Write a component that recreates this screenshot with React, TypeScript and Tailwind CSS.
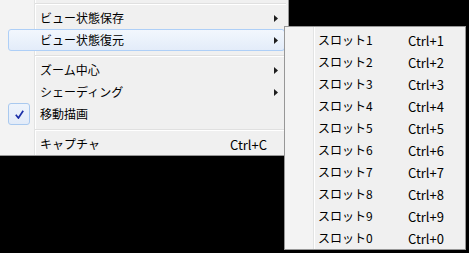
import React from "react";

const font = { fontFamily: '"Noto Sans CJK JP", "Noto Sans", sans-serif' };

function Arrow() {
  return (
    <svg width="4" height="7" viewBox="0 0 4 7" className="shrink-0">
      <polygon points="0,0 4,3.5 0,7" fill="#1e1e1e" />
    </svg>
  );
}

function Sep({ top = 4, h = 8, pl = 35 }: { top?: number; h?: number; pl?: number }) {
  return (
    <div className="flex flex-col pr-[2px]" style={{ height: h, paddingTop: top, paddingLeft: pl }}>
      <div className="h-px bg-[#e0e0e0]" />
      <div className="h-px bg-white" />
    </div>
  );
}

type ItemProps = {
  label: string;
  shortcut?: string;
  sub?: boolean;
  hot?: boolean;
  checked?: boolean;
};

function MainItem({ label, shortcut, sub, hot, checked }: ItemProps) {
  return (
    <div
      className={
        "box-border flex h-[22px] items-center ml-[8px] mr-[3px] rounded-[3px] " +
        (hot
          ? "border border-[#aecff7] bg-[linear-gradient(to_bottom,#f2f7fd,#e3ecf9)]"
          : "border border-transparent")
      }
    >
      <div className="flex w-[31px] shrink-0 items-center self-stretch">
        {checked && (
          <div className="ml-[-1px] mt-[-1px] mb-[-1px] flex h-[22px] w-[22px] items-center justify-center rounded-[3px] border border-[#a9c9ef] bg-[linear-gradient(to_bottom,#eef4fc,#e2ebf8)]">
            <svg width="9" height="9" viewBox="0 0 9 9">
              <polyline points="0.8,4.8 3.4,8 8.2,0.8" fill="none" stroke="#1b2fa8" strokeWidth="1.7" />
            </svg>
          </div>
        )}
      </div>
      <span className="w-[190px] shrink-0 text-[12px] leading-none text-black">{label}</span>
      <span className="flex-1 text-[13px] leading-none text-black">{shortcut}</span>
      {sub && (
        <div className="mr-[6px]">
          <Arrow />
        </div>
      )}
    </div>
  );
}

function SubItem({ n }: { n: string }) {
  return (
    <div className="box-border flex h-[22px] items-center ml-[3px] mr-[3px] border border-transparent">
      <div className="w-[29px] shrink-0" />
      <span className="w-[90px] shrink-0 text-[12px] leading-none text-black">{"スロット" + n}</span>
      <span className="text-[13px] leading-none text-black">{"Ctrl+" + n}</span>
    </div>
  );
}

export default function App() {
  const slots = ["1", "2", "3", "4", "5", "6", "7", "8", "9", "0"];
  return (
    <div className="relative h-[253px] w-[469px] overflow-hidden bg-black" style={font}>
      {/* main menu */}
      <div className="absolute left-[-1px] top-[-2px] box-border w-[290px] border border-[#979797] bg-[linear-gradient(to_right,#f3f3f3_0_34px,#e2e3e3_34px_35px,#ffffff_35px_36px,#f0f0f0_36px)]">
        <Sep top={4} h={8} />
        <MainItem label="ビュー状態保存" sub />
        <MainItem label="ビュー状態復元" sub hot />
        <Sep />
        <MainItem label="ズーム中心" sub />
        <MainItem label="シェーディング" sub />
        <MainItem label="移動描画" checked />
        <Sep />
        <MainItem label="キャプチャ" shortcut="Ctrl+C" />
      </div>
      {/* submenu */}
      <div className="absolute left-[284px] top-[26px] box-border h-[224px] w-[182px] border border-[#979797] bg-[linear-gradient(to_right,#f3f3f3_0_28px,#e2e3e3_28px_29px,#ffffff_29px_30px,#f0f0f0_30px)] pt-[2px]">
        {slots.map((s) => (
          <SubItem key={s} n={s} />
        ))}
      </div>
    </div>
  );
}
